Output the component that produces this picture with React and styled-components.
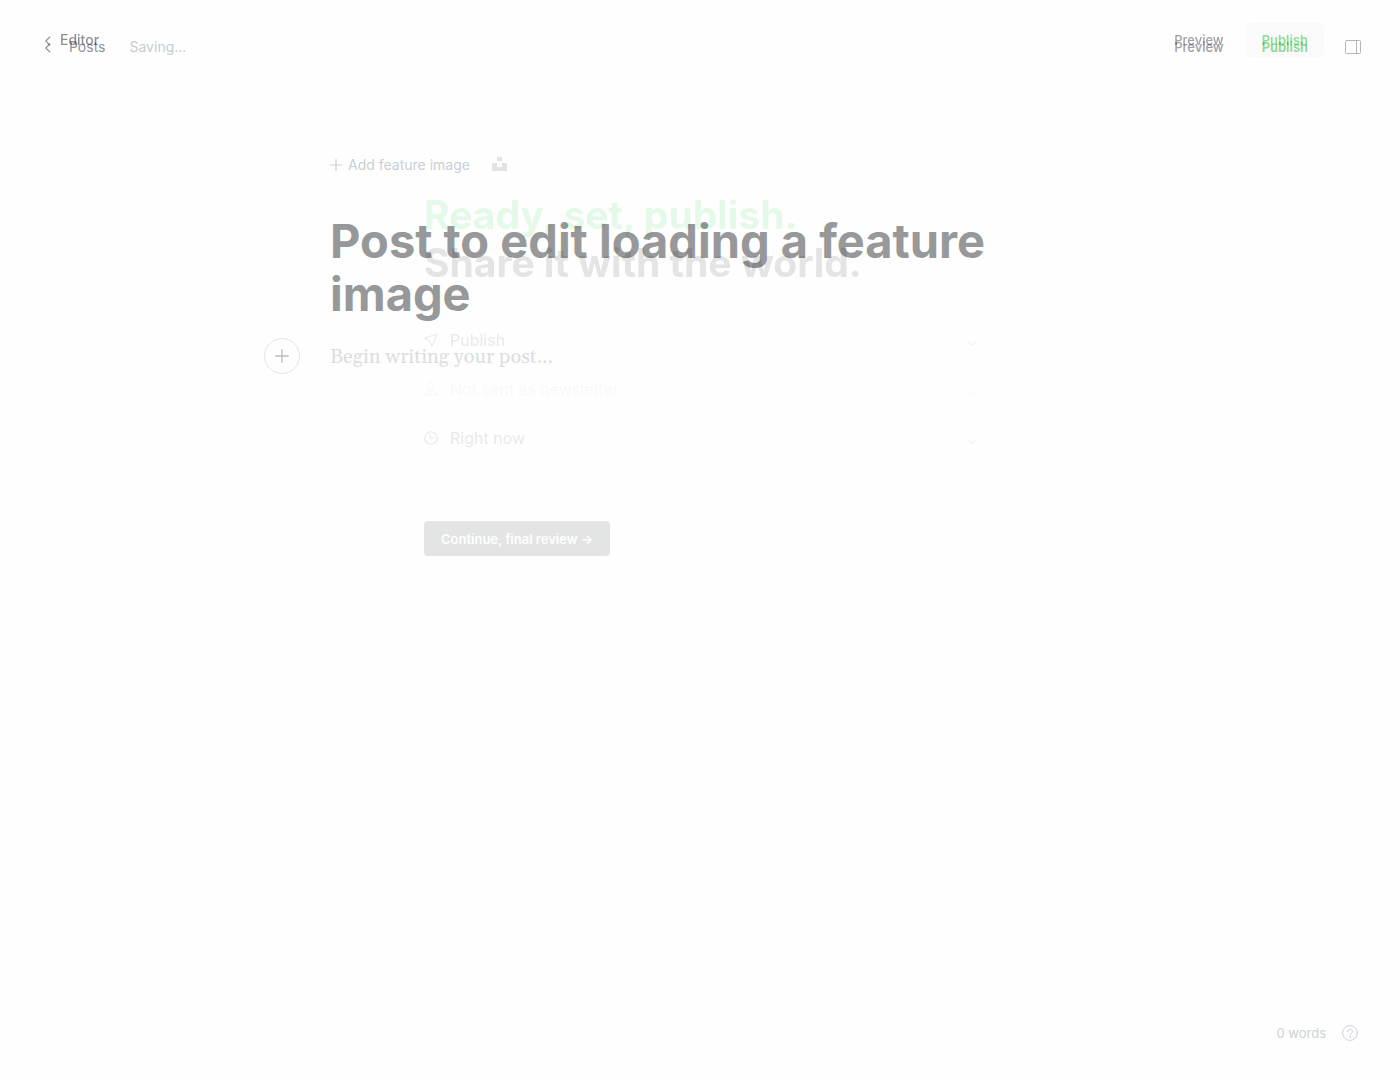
import React from "react";
import styled, { createGlobalStyle } from "styled-components";

const GlobalStyle = createGlobalStyle`
  *, *::before, *::after { box-sizing: border-box; }
  body {
    margin: 0;
    background: #fefefe;
    font-family: Inter, "Liberation Sans", sans-serif;
    font-size: 14px;
    line-height: 20px;
    color: #8f9397;
  }
  button, textarea { font: inherit; color: inherit; }
  h2 { margin: 0; }
  svg { display: block; flex: none; }
`;

const Screen = styled.div`
  position: relative;
  min-height: 100vh;
  display: flex;
  flex-direction: column;
`;

const Header = styled.header`
  display: flex;
  align-items: center;
  justify-content: space-between;
  height: ${(p) => p.$height};
  padding: 0 ${(p) => p.$end} 0 45px;
`;

const Group = styled.div`
  display: flex;
  align-items: center;
  gap: ${(p) => p.$gap};
`;

const BackLink = styled.a`
  display: inline-flex;
  align-items: center;
  gap: ${(p) => p.$gap};
  color: ${(p) => p.$color};
  font-weight: ${(p) => p.$weight || 400};
  text-decoration: none;
  svg { margin-top: 2px; }
`;

const Status = styled.span`
  color: #c5ccd2;
`;

const BarButton = styled.button`
  display: flex;
  align-items: center;
  height: 34px;
  padding: 0 16px;
  border: 0;
  border-radius: 4px;
  background: ${(p) => p.$fill || "transparent"};
  color: ${(p) => p.$color};
  font-size: 13px;
  font-weight: ${(p) => p.$weight || 400};
  cursor: pointer;
`;

const IconButton = styled.button`
  display: grid;
  place-items: center;
  padding: 0;
  border: 0;
  background: none;
  color: ${(p) => p.$color};
  cursor: pointer;
`;

const Canvas = styled.main`
  width: 100%;
  max-width: 740px;
  margin: 0 auto;
  padding-top: 61px;
`;

const FeatureBar = styled.div`
  display: flex;
  align-items: center;
  gap: 22px;
  color: #c8cfd5;
`;

const FeatureButton = styled.button`
  display: flex;
  align-items: center;
  gap: 6px;
  padding: 0;
  border: 0;
  background: none;
  cursor: pointer;
`;

const TitleInput = styled.textarea`
  display: block;
  width: 100%;
  height: 114px;
  margin-top: 39px;
  padding: 0;
  border: 0;
  outline: 0;
  resize: none;
  overflow: hidden;
  background: none;
  color: #979899;
  font-size: 47px;
  font-weight: 700;
  line-height: 53px;
`;

const BodyRow = styled.div`
  display: grid;
  grid-template-columns: 36px 1fr;
  align-items: center;
  gap: 30px;
  margin: 10px 0 0 -66px;
`;

const AddCard = styled(IconButton)`
  width: 36px;
  height: 36px;
  border: 1px solid #e3e5e6;
  border-radius: 50%;
`;

const BodyInput = styled.textarea`
  display: block;
  width: 100%;
  height: 36px;
  padding: 2px 0 0;
  border: 0;
  outline: 0;
  resize: none;
  overflow: hidden;
  background: none;
  font-family: Georgia, Gelasio, "Liberation Serif", serif;
  font-size: 20px;
  line-height: 34px;
  &::placeholder { color: #dadee2; opacity: 1; }
`;

const Footer = styled.footer`
  display: flex;
  align-items: center;
  justify-content: flex-end;
  gap: 16px;
  margin-top: auto;
  padding: 0 42px 37px;
  color: #cbd2d8;
  font-size: 13px;
`;

const Overlay = styled.section`
  position: absolute;
  inset: 0;
  mix-blend-mode: multiply;
`;

const Flow = styled.div`
  width: 100%;
  max-width: 552px;
  margin: 0 auto;
  padding-top: 111px;
`;

const Headline = styled.h2`
  color: #e4e5e5;
  font-size: 39px;
  font-weight: 700;
  line-height: 48px;
`;

const Accent = styled.span`
  display: block;
  color: #e6faea;
`;

const Settings = styled.div`
  margin-top: 29px;
`;

const Setting = styled.button`
  display: flex;
  align-items: center;
  gap: 12px;
  width: 100%;
  height: 49px;
  padding: 0;
  border: 0;
  border-bottom: 1px solid ${(p) => (p.$last ? "transparent" : "#fdfdfd")};
  background: none;
  color: ${(p) => (p.$muted ? "#f8f9f9" : "#e9eaea")};
  font-size: 16px;
  cursor: pointer;
`;

const Caret = styled.span`
  margin-left: auto;
  padding-top: 8px;
  color: ${(p) => (p.$muted ? "#fbfbfb" : "#f4f5f5")};
`;

const Continue = styled.button`
  height: 35px;
  margin-top: 58px;
  padding: 0 17px;
  border: 0;
  border-radius: 4px;
  background: #e4e6e5;
  color: #ffffff;
  font-size: 13px;
  font-weight: 600;
  cursor: pointer;
`;

const stroke = { fill: "none", stroke: "currentColor", strokeLinecap: "round", strokeLinejoin: "round" };

const Chevron = () => (
  <svg width="6" height="10" viewBox="0 0 6 10" {...stroke} strokeWidth="1.1"><path d="M4.800 1 .8 5l4 4" /></svg>
);
const Plus = ({ size, width }) => (
  <svg width={size} height={size} viewBox="0 0 16 16" {...stroke} strokeWidth={width}><path d="M8 .8v14.400M.8 8h14.400" /></svg>
);
const Down = () => (
  <svg width="9" height="6" viewBox="0 0 9 6" {...stroke} strokeWidth="1.3"><path d="m1 1 3.500 3.500L8 1" /></svg>
);
const Panel = () => (
  <svg width="16" height="14" viewBox="0 0 16 14" {...stroke}><rect x=".5" y=".5" width="15" height="13" rx="1" /><path d="M11.500.5v13" /></svg>
);
const Unsplash = () => (
  <svg width="15" height="16" viewBox="0 0 15 16" fill="#e0e4e7"><path d="M5 0h5v4H5zM0 6h5v4h5V6h5v8H0z" /></svg>
);
const Send = () => (
  <svg width="14" height="14" viewBox="0 0 15 15" {...stroke} strokeWidth="1.2"><path d="M14 1 .9 5.400q-.4.300 0 .6l4.800 2.700 2.700 5q.3.500.6 0z" /></svg>
);
const Person = () => (
  <svg width="14" height="14" viewBox="0 0 15 15" {...stroke} strokeWidth="1.2"><ellipse cx="7.500" cy="4.300" rx="3" ry="3.600" /><path d="M1 14c0-2.600 2-3.700 4.200-4.100h4.600C12 10.300 14 11.400 14 14z" /></svg>
);
const Clock = () => (
  <svg width="14" height="14" viewBox="0 0 15 15" {...stroke} strokeWidth="1.3"><circle cx="7.500" cy="7.500" r="6.700" /><path d="M6.600 3.400v4.300h3.700" /></svg>
);
const Help = () => (
  <svg width="16" height="16" viewBox="0 0 16 16" {...stroke}><circle cx="8" cy="8" r="7.400" /><path d="M5.500 6.600c0-3.200 5.200-3 5.200 0 0 1.700-2.600 1.500-2.600 3" /><circle cx="8" cy="12" r=".3" /></svg>
);

const settings = [
  { label: "Publish", Icon: Send },
  { label: "Not sent as newsletter", Icon: Person, muted: true },
  { label: "Right now", Icon: Clock },
];

export default function App() {
  return (
    <>
      <GlobalStyle />
      <Screen>
        <Header $height="94px" $end="39px">
          <Group $gap="24px">
            <BackLink href="#posts" $gap="18px" $color="#8f9397"><Chevron />Posts</BackLink>
            <Status>Saving...</Status>
          </Group>
          <Group $gap="21px">
            <Group $gap="6px">
              <BarButton $color="#9da1a5" $weight={500}>Preview</BarButton>
              <BarButton $color="#8fdc98" $weight={600}>Publish</BarButton>
            </Group>
            <IconButton $color="#b3b6b9" aria-label="Settings"><Panel /></IconButton>
          </Group>
        </Header>
        <Canvas>
          <FeatureBar>
            <FeatureButton><Plus size={12} width={1.6} />Add feature image</FeatureButton>
            <IconButton aria-label="Choose from Unsplash"><Unsplash /></IconButton>
          </FeatureBar>
          <TitleInput aria-label="Post title" rows={2} defaultValue="Post to edit loading a feature image" />
          <BodyRow>
            <AddCard $color="#b9bfc5" aria-label="Add a card"><Plus size={14} width={1.6} /></AddCard>
            <BodyInput aria-label="Post body" placeholder="Begin writing your post..." />
          </BodyRow>
        </Canvas>
        <Footer>
          <span>0 words</span>
          <IconButton $color="#cbd2d8" aria-label="Help"><Help /></IconButton>
        </Footer>
        <Overlay aria-label="Publish post">
          <Header $height="80px" $end="76px">
            <BackLink href="#editor" $gap="9px" $color="#909396" $weight={500}><Chevron />Editor</BackLink>
            <Group $gap="6px">
              <BarButton $color="#a0a2a4" $weight={500}>Preview</BarButton>
              <BarButton $fill="#fafbfa" $color="#8fdf98" $weight={600}>Publish</BarButton>
            </Group>
          </Header>
          <Flow>
            <Headline><Accent>Ready, set, publish.</Accent>Share it with the world.</Headline>
            <Settings>
              {settings.map(({ label, Icon, muted }, i) => (
                <Setting key={label} $muted={muted} $last={i === settings.length - 1}>
                  <Icon />{label}<Caret $muted={muted}><Down /></Caret>
                </Setting>
              ))}
            </Settings>
            <Continue>Continue, final review →</Continue>
          </Flow>
        </Overlay>
      </Screen>
    </>
  );
}
